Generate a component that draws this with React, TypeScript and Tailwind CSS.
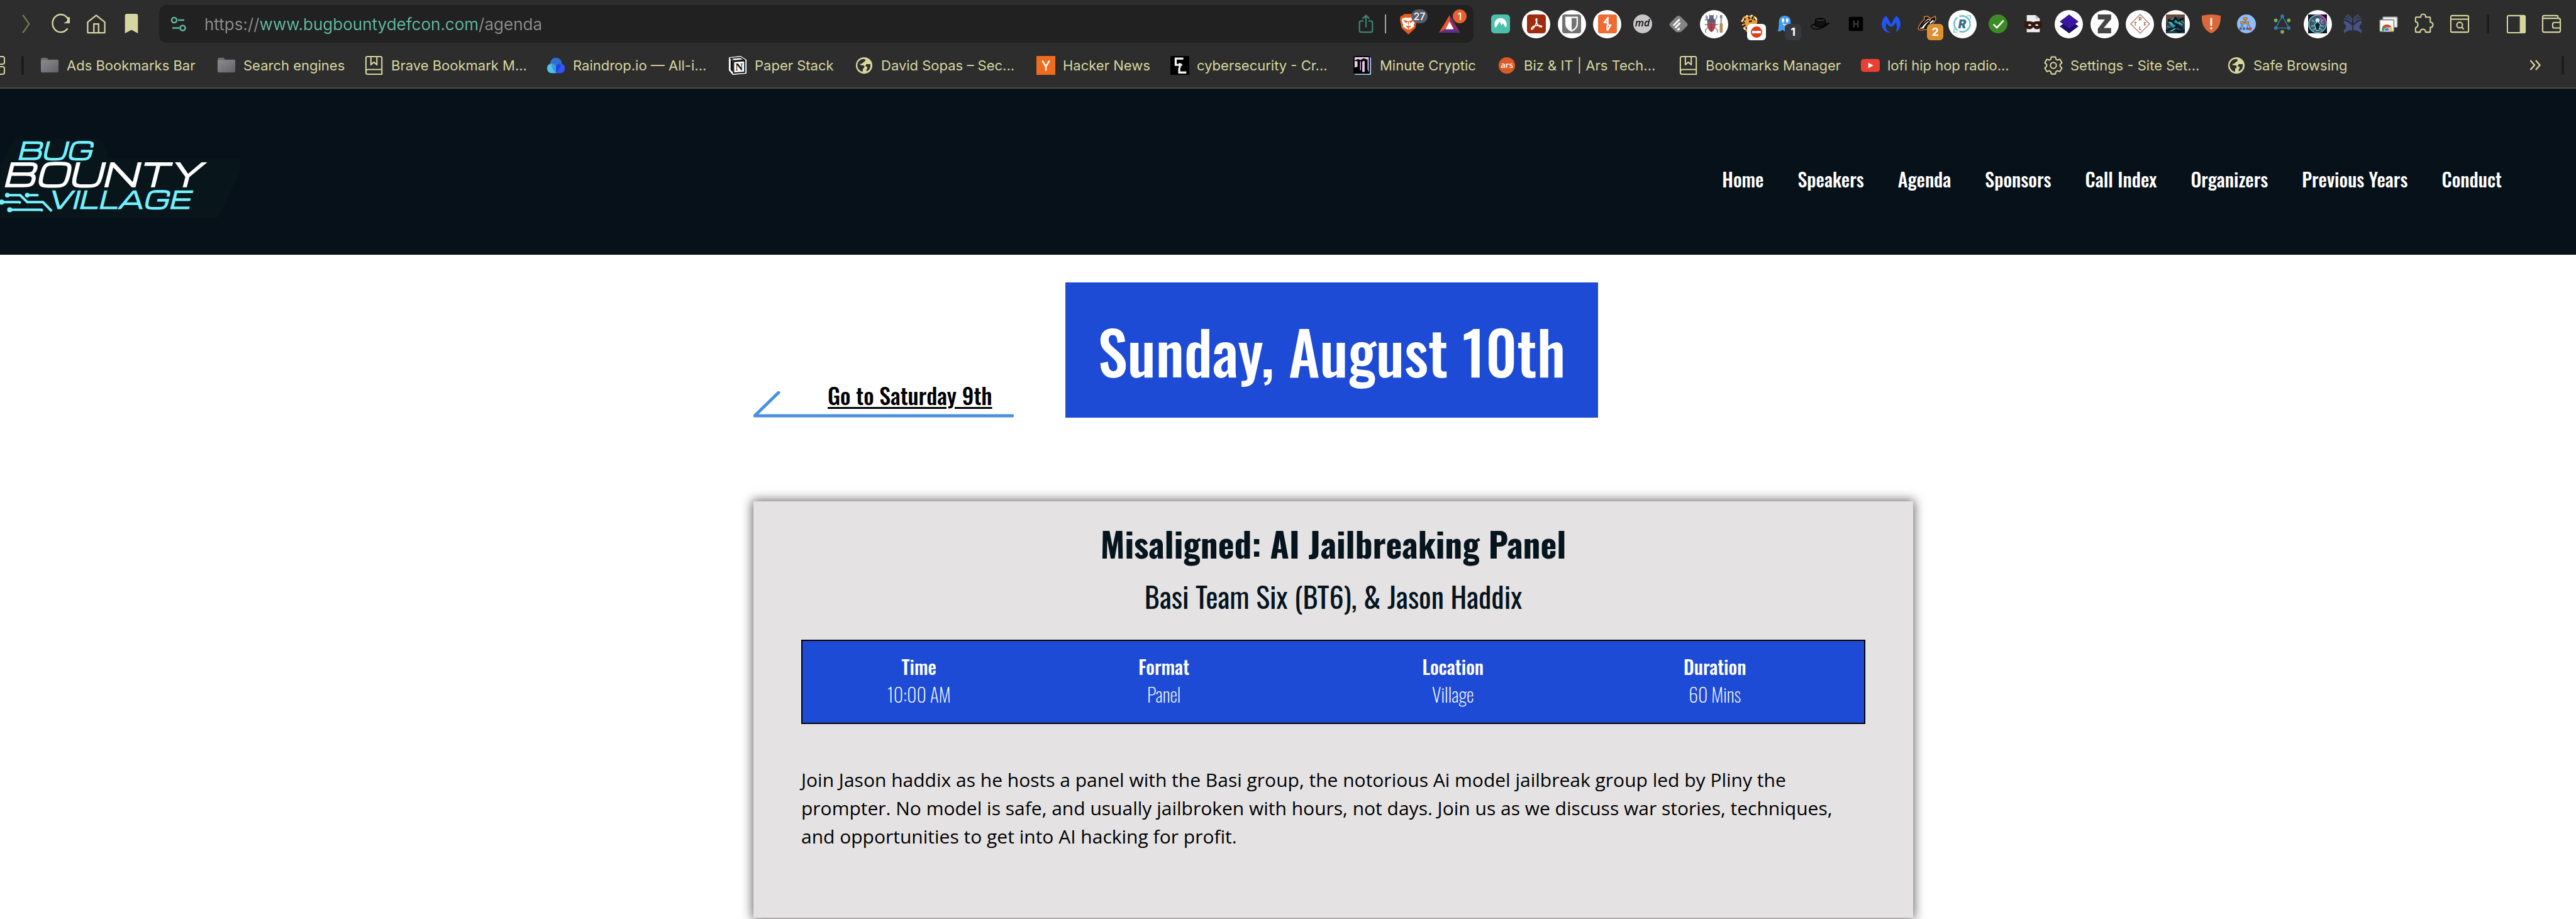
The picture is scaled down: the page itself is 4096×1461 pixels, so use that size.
import type { ReactNode } from "react";

const CREAM = "#d6d6a0";

function Glyph({ size = 32, children }: { size?: number; children: ReactNode }) {
  return (
    <svg viewBox={`0 0 ${size} ${size}`} className="size-[30px] shrink-0 overflow-visible" fill="none" aria-hidden="true">
      {children}
    </svg>
  );
}

function Ext({ label, disc, badge, children }: { label: string; disc?: boolean; badge?: ReactNode; children: ReactNode }) {
  return (
    <button type="button" aria-label={label} className="relative flex flex-1 items-center justify-center">
      <span className={disc ? "flex size-[45px] items-center justify-center rounded-full bg-white shadow" : "flex size-[45px] items-center justify-center"}>
        {children}
      </span>
      {badge}
    </button>
  );
}

function NavButton({ label, children }: { label: string; children: ReactNode }) {
  return (
    <button type="button" aria-label={label} className="flex w-14 items-center justify-center">
      {children}
    </button>
  );
}

/* ---------- bookmark icons ---------- */

const Folder = () => (
  <Glyph>
    <defs>
      <linearGradient id="folder" x1="0" y1="0" x2="1" y2="1">
        <stop offset="0" stopColor="#8a8a92" />
        <stop offset="0.5" stopColor="#77777d" />
        <stop offset="1" stopColor="#606064" />
      </linearGradient>
    </defs>
    <path d="M1 6q0-3 3-3h6q2 0 3 2l1 1h15q2 0 2 2v3H1z" fill="#6d6d72" />
    <rect x="1" y="7" width="30" height="21" rx="3" fill="url(#folder)" />
  </Glyph>
);

const BookIcon = () => (
  <Glyph>
    <g stroke={CREAM} strokeWidth="2.2" strokeLinejoin="round">
      <path d="M29 23V3.500Q29 1 26.500 1H4.500Q2 1 2 3.500V28Q2 31 5 31H30" />
      <path d="M2 26.500Q2 23 5.500 23H29M29 23v8" />
      <path d="M10.500 1V15L15.500 10.500L20.500 15V1" />
    </g>
  </Glyph>
);

const Raindrop = () => (
  <Glyph>
    <path d="M16 3C22 3 26 8 26 14C26 20 20 28 16 28C12 28 6 20 6 14C6 8 10 3 16 3Z" fill="#2f6fd0" />
    <path d="M1 21C1 16 4 13 8.500 13C13 13 16 16 16 21V29H8.500C4 29 1 25.500 1 21Z" fill="#4fc3e8" />
    <path d="M31 21C31 16 28 13 23.500 13C19 13 16 16 16 21V29H23.500C28 29 31 25.500 31 21Z" fill="#3355ff" />
    <path d="M8.500 13C13 13 16 16 16 21V28C12 26 8 20 8.500 13Z" fill="#3d9adf" />
    <path d="M23.500 13C19 13 16 16 16 21V28C20 26 24 20 23.500 13Z" fill="#1d46d8" />
  </Glyph>
);

const Notion = () => (
  <Glyph>
    <path d="M2 3L21 1L30 7V29L8 31L2 24Z" fill="#fff" stroke="#fff" strokeWidth="2" strokeLinejoin="round" />
    <path d="M4 4L21 2.500L27 6.500L9 8Z" fill="#fff" stroke="#111" strokeWidth="1.800" />
    <path d="M9 9.500L28 8V27.500L9 29Z" fill="#fff" stroke="#111" strokeWidth="2" />
    <path d="M4 5V23.500L8 28V9Z" fill="#111" />
    <text x="18.500" y="25" textAnchor="middle" fontFamily="Liberation Serif" fontWeight="700" fontSize="18" fill="#111">N</text>
  </Glyph>
);

const Globe = () => (
  <Glyph>
    <circle cx="16" cy="16" r="14" fill={CREAM} />
    <path d="M4.500 15C5 10 9 5 16 5L18 6C19 8 17 8.500 16 10C14 10.500 13.500 12 12.500 13H9.500V15.500L15 16C17 17 16.500 20 15.500 20.500C13.500 21 14 23 13.500 27C8 25.500 4.500 21 4.500 15Z" fill="#2d2d2d" />
    <path d="M26.500 13.500C24 14.500 22 13.500 20 13.500L18.500 16C18 18.500 20 18 21.500 18.500C22.500 20 20 22.500 19.500 24.500C20 25.500 21 26 22 25C26 22.500 27.500 18 26.500 13.500Z" fill="#2d2d2d" />
  </Glyph>
);

const HackerNews = () => (
  <Glyph>
    <path d="M0 0H32V32H0Z" fill="#ef6c1f" />
    <path d="M10 8L16 18L22 8M16 18V25" stroke="#fff" strokeWidth="2.600" />
  </Glyph>
);

const CyberIcon = () => (
  <Glyph>
    <path d="M0 0H32V32H0Z" fill="#000" />
    <path d="M22 4.500H9V15H20M16 12V20M15 20V28H27" stroke="#f2f2f2" strokeWidth="3.500" />
  </Glyph>
);

const Cryptic = () => (
  <Glyph>
    <rect x="2" y="2" width="28" height="30" rx="2" fill="#9cc4f5" />
    <rect x="0" y="0" width="28" height="30" rx="2" fill="#000" />
    <path d="M2 2H26V27H2Z" fill="#ecc8f2" />
    <path d="M1 8L8 5L12 7L17 4L24 6V23L26 28H19V9L17 8L15 10V25L16 28H1V20L7 18V9Z" fill="#000" />
    <path d="M12 9V24" stroke="#ecc8f2" strokeWidth="1.500" />
    <path d="M15.500 10L18.500 8V27H15.500Z" fill="#ecc8f2" />
  </Glyph>
);

const Ars = () => (
  <Glyph>
    <circle cx="16" cy="16" r="14" fill="#dd5a27" />
    <text x="16" y="20" textAnchor="middle" fontFamily="Open Sans" fontWeight="600" fontSize="14" fill="#fff">ars</text>
  </Glyph>
);

const YouTube = () => (
  <Glyph>
    <rect x="0" y="5" width="32" height="22" rx="5" fill="#ea4033" />
    <path d="M12.500 11.500L21 16L12.500 20.500Z" fill="#fff" />
  </Glyph>
);

const Gear = () => (
  <Glyph>
    <path
      d="M12.500 1.500H19.500L20.500 5.500L23 7L27 5.500L30.500 11.500L27.500 14.500V17.500L30.500 20.500L27 26.500L23 25L20.500 26.500L19.500 30.500H12.500L11.500 26.500L9 25L5 26.500L1.500 20.500L4.500 17.500V14.500L1.500 11.500L5 5.500L9 7L11.500 5.500Z"
      stroke={CREAM}
      strokeWidth="2.200"
      strokeLinejoin="round"
    />
    <circle cx="16" cy="16" r="5" stroke={CREAM} strokeWidth="2.200" />
  </Glyph>
);

const bookmarks: { name: string; icon: ReactNode; width: string }[] = [
  { name: "Ads Bookmarks Bar", icon: <Folder />, width: "w-[281px]" },
  { name: "Search engines", icon: <Folder />, width: "w-[235px]" },
  { name: "Brave Bookmark M...", icon: <BookIcon />, width: "w-[289px]" },
  { name: "Raindrop.io — All-i...", icon: <Raindrop />, width: "w-[289px]" },
  { name: "Paper Stack", icon: <Notion />, width: "w-[201px]" },
  { name: "David Sopas – Sec...", icon: <Globe />, width: "w-[289px]" },
  { name: "Hacker News", icon: <HackerNews />, width: "w-[213px]" },
  { name: "cybersecurity - Cr...", icon: <CyberIcon />, width: "w-[291px]" },
  { name: "Minute Cryptic", icon: <Cryptic />, width: "w-[229px]" },
  { name: "Biz & IT | Ars Tech...", icon: <Ars />, width: "w-[289px]" },
  { name: "Bookmarks Manager", icon: <BookIcon />, width: "w-[289px]" },
  { name: "lofi hip hop radio...", icon: <YouTube />, width: "w-[291px]" },
  { name: "Settings - Site Set...", icon: <Gear />, width: "w-[291px]" },
  { name: "Safe Browsing", icon: <Globe />, width: "w-[213px]" },
];

function Extensions() {
  return (
    <div className="ml-[15px] flex h-[60px] w-[1581px] shrink-0">
      <Ext label="VPN">
        <Glyph>
          <rect width="32" height="32" rx="6" fill="#4bc1ad" />
          <path d="M7 22.500C3 14 8 6 16 6C24 6 29 14 25 22.500L20 15L17.500 18L14.500 12L9.500 20Z" fill="#fff" />
        </Glyph>
      </Ext>
      <Ext label="PDF reader" disc>
        <Glyph>
          <rect width="32" height="32" rx="5" fill="#a02c10" />
          <path d="M7.500 24C9 19 19 17.500 24.500 19.500C27 21 23 23 19.500 19C16 15 14 7.500 16 7C18.500 7 16 17 11 23C9 26 7 26 7.500 24Z" stroke="#fff" strokeWidth="1.800" />
        </Glyph>
      </Ext>
      <Ext label="Password manager" disc>
        <Glyph>
          <rect width="32" height="32" rx="4" fill="#737373" />
          <path d="M6.500 5H25.500V16C25.500 22 21 25.500 16 28C11 25.500 6.500 22 6.500 16Z" stroke="#fff" strokeWidth="2.400" />
          <path d="M7 5H16V27C11 25 7 21 7 16Z" fill="#fff" />
        </Glyph>
      </Ext>
      <Ext label="Burp" disc>
        <Glyph>
          <rect width="32" height="32" rx="4" fill="#ef6b33" />
          <path d="M17.500 4.500L10.500 13.500H16.500V18H21.500L15.500 27.500M16.500 5V13.500M15.500 18V27" stroke="#fff" strokeWidth="2.600" strokeLinejoin="round" />
        </Glyph>
      </Ext>
      <Ext label="Markdown">
        <Glyph>
          <circle cx="16" cy="16" r="16" fill="#c8c8c8" />
          <text x="15.500" y="20.500" textAnchor="middle" fontFamily="Open Sans" fontStyle="italic" fontWeight="600" fontSize="17" fill="#111">md</text>
        </Glyph>
      </Ext>
      <Ext label="Feed reader">
        <Glyph>
          <path d="M12 4Q16 0 20 4L30 14Q33 17.500 30 20L22 28Q20 30 17 30H14Q12 30 10 28L2 20Q-1 17 2 14Z" fill="#848484" />
          <path d="M8 18L17 9M11 22L18 15M15 26L17 24" stroke="#fff" strokeWidth="3" strokeLinecap="round" />
        </Glyph>
      </Ext>
      <Ext label="Bug inspector" disc>
        <Glyph>
          <path d="M5 3V9L1 9M3 1V6L6 10M1 17H6M6 22L2 26V31M17 10L21 6V1M18 17H23M18 22L22 26V31M8 0L10 4M16 0L14 4" stroke="#777d8c" strokeWidth="1.500" />
          <circle cx="12" cy="5" r="4" fill="#62687a" />
          <path d="M5 9Q12 3 19 9V14H5Z" fill="#565f7d" />
          <path d="M5 14H19Q20 25 12 30Q4 25 5 14Z" fill="#a8464f" />
          <path d="M12 14V29" stroke="#4e4a58" />
          <path d="M26.500 1H30.500V6H29.500V16H27.500V6H26.500Z" fill="#7a8290" />
          <rect x="26" y="15" width="5" height="16" rx="1.500" fill="#b5894c" />
        </Glyph>
      </Ext>
      <Ext
        label="Tiger blocker"
        badge={
          <span className="absolute right-0.5 bottom-1 flex h-[26px] w-[30px] items-center justify-center rounded-md bg-white">
            <span className="flex size-[18px] items-center justify-center rounded-full bg-[#dd3c18]">
              <span className="h-1 w-3.5 bg-white" />
            </span>
          </span>
        }
      >
        <Glyph>
          <path d="M3 10Q4 1 12 3Q18 0 25 3Q30 6 29 13L27 18L15 29H9L3 19Z" fill="#e9a03e" />
          <path d="M4 12L9 7M1 15L8 14M3 21L9 18M14 4L16 8M22 3L20 8M8 28L11 22M15 12L20 11M27 9L23 8" stroke="#1c1712" strokeWidth="2.500" />
          <path d="M2 12L6 8M10 3L13 2M18 2L21 2M25 5L28 9M6 23L10 26" stroke="#fff" strokeWidth="2.500" />
        </Glyph>
      </Ext>
      <Ext
        label="Ghost"
        badge={
          <span className="absolute right-0.5 bottom-1 flex h-[26px] w-[26px] items-center justify-center rounded-md bg-[#37393e] font-['Inter'] text-lg font-bold text-white">1</span>
        }
      >
        <Glyph>
          <path d="M6 13Q6 2 16 2Q26 2 26 13V29L21 27L16 29L12 26L7 29L4 28Q6 23 6 13Z" fill="#459ded" />
          <ellipse cx="13" cy="10" rx="2" ry="3.500" fill="#fff" />
          <ellipse cx="20" cy="10" rx="2" ry="3.500" fill="#fff" />
          <path d="M13 16Q16 20 20 16" stroke="#fff" strokeWidth="1.500" />
        </Glyph>
      </Ext>
      <Ext label="Hat">
        <Glyph>
          <path d="M7 18L9 8Q16 5 24 8L26 17Q16 25 7 18Z" fill="#101010" stroke="#000" strokeWidth="1.500" />
          <path d="M8 17Q1 17 1 21Q2 25 10 25Q20 25 31 15Q28 15 25 17" stroke="#000" strokeWidth="1.500" />
          <path d="M10 9Q16 12 24 9" stroke="#555" />
        </Glyph>
      </Ext>
      <Ext label="H tool">
        <Glyph>
          <rect x="4" y="4" width="24" height="24" rx="2" fill="#000" />
          <path d="M12.500 10V22M19.500 10V22M12.500 16H19.500" stroke="#3a3a3a" strokeWidth="2.400" />
        </Glyph>
      </Ext>
      <Ext label="Malware guard">
        <Glyph>
          <path d="M7 2Q11 6 16 17Q21 6 25 2Q32 8 32 17Q30 27 24 30Q28 20 24 14Q20 20 16 21Q12 20 8 14Q4 27 16 31Q1 31 0 16Q1 7 7 2Z" fill="#1f55f5" />
        </Glyph>
      </Ext>
      <Ext
        label="Badger"
        badge={
          <span className="absolute right-0.5 bottom-1 flex h-[26px] w-[26px] items-center justify-center rounded-md bg-[#dd9031] font-['Inter'] text-lg font-bold text-white">2</span>
        }
      >
        <Glyph>
          <path d="M1 23Q6 12 12 8L11 4L17 3L22 7L30 3L31 9L27 14L22 24L10 26Q2 28 1 23Z" fill="#0d0d0d" stroke="#d9813f" strokeWidth="1.600" />
          <path d="M4 24Q9 14 18 7L23 9Q15 14 10 24Z" fill="#fff" />
          <path d="M6 22Q11 14 20 9" stroke="#111" strokeWidth="2.500" />
          <path d="M21 15L27 10" stroke="#fff" strokeWidth="2.500" />
        </Glyph>
      </Ext>
      <Ext label="R tool" disc>
        <Glyph>
          <circle cx="16" cy="16" r="13.500" stroke="#72c3cc" strokeWidth="2.800" strokeDasharray="26 3" />
          <path d="M2 24V30H8M30 8V2H24" stroke="#72c3cc" strokeWidth="1.500" />
          <text x="16" y="23" textAnchor="middle" fontFamily="Inter" fontStyle="italic" fontWeight="900" fontSize="20" fill="#2f6f88">R</text>
        </Glyph>
      </Ext>
      <Ext label="Verified">
        <Glyph>
          <circle cx="16" cy="16" r="16" fill="#3d8b27" />
          <path d="M9 17.500L14 22.500L24.500 11" stroke="#fff" strokeWidth="2.800" strokeLinecap="round" />
        </Glyph>
      </Ext>
      <Ext label="Mask">
        <Glyph>
          <path d="M5 1H20L27 7V30H5Z" fill="#eeeef0" />
          <path d="M20 1V7H27Z" fill="#bdbdc2" />
          <path d="M1 13Q8 10 16 13Q24 10 31 13V19Q28 25 22 25Q18 25 16 21Q14 25 9 25Q3 25 1 19Z" fill="#33190f" />
          <path d="M7 18Q10 15 13 18Q10 21 7 18ZM19 18Q22 15 25 18Q22 21 19 18Z" fill="#fff" />
        </Glyph>
      </Ext>
      <Ext label="Layers" disc>
        <Glyph>
          <path d="M16 9L32 20L16 32L0 20Z" fill="#1b0a66" />
          <path d="M16 0L32 12L16 24L0 12Z" fill="#3a15a0" />
        </Glyph>
      </Ext>
      <Ext label="Z tool" disc>
        <Glyph>
          <path d="M5 0H27.500V8L15 23H27.500V32H5V24L17 8.500H5Z" fill="#454545" />
        </Glyph>
      </Ext>
      <Ext label="RTFL" disc>
        <Glyph>
          <path d="M16 0L32 16L16 32L0 16Z" fill="#fff" stroke="#a0654e" strokeWidth="1.200" />
          <g fontFamily="Inter" fontWeight="600" fontSize="8" fill="#7c4a35" textAnchor="middle">
            <text x="16" y="11">R</text>
            <text x="8" y="19">T</text>
            <text x="24.500" y="19">F</text>
            <text x="16" y="27">L</text>
          </g>
        </Glyph>
      </Ext>
      <Ext label="Hunter" disc>
        <Glyph>
          <path d="M0 0H32V32H0Z" fill="#20444e" />
          <path d="M0 0H32V8L20 4L8 7L0 14Z" fill="#6d4a38" />
          <circle cx="15" cy="14" r="9" fill="#2f93a0" />
          <path d="M3 9L12 12L16 6L21 11L30 6M11 14L20 18L12 26M18 19L28 24M0 28L10 24L22 29L32 27" stroke="#0c1620" strokeWidth="3.500" />
          <path d="M5 13L12 17M22 14L28 18M8 28L16 24" stroke="#62d2da" strokeWidth="1.500" />
          <path d="M26 11L31 15M2 20L7 22" stroke="#c9683c" strokeWidth="1.500" />
        </Glyph>
      </Ext>
      <Ext label="Warning shield">
        <Glyph>
          <path d="M0 2Q16-2 32 2Q33 24 16 32Q-1 24 0 2Z" fill="#d9693a" />
          <path d="M16 7V18" stroke="#fff" strokeWidth="3" strokeLinecap="round" />
          <circle cx="16" cy="23.500" r="1.900" fill="#fff" />
        </Glyph>
      </Ext>
      <Ext label="Org chart">
        <Glyph>
          <circle cx="16" cy="16" r="16" fill="#93bdf8" />
          <path d="M14 8V13M8 17L5 25M9 17L11 25M19 17L16 25M20 17L24 25M8 13H20" stroke="#4c5568" />
          <path d="M11 5H17V9H11ZM6 12H12V16H6ZM14 12H20V16H14Z" fill="#d39a3a" stroke="#6b5732" strokeWidth="0.700" />
          <path d="M4 22H8V26H4ZM10 22H14V26H10ZM16 22H20V26H16Z" fill="#47618e" />
          <path d="M20 22H25V27H20Z" fill="#c0504a" />
        </Glyph>
      </Ext>
      <Ext label="Graph">
        <Glyph>
          <path d="M16 3L27.500 23H4.500Z" stroke="#3779b5" strokeWidth="1.700" />
          <circle cx="16" cy="3" r="3" fill="#3779b5" />
          <circle cx="5" cy="23" r="3" fill="#3779b5" />
          <circle cx="27" cy="23" r="3" fill="#3779b5" />
          <circle cx="5" cy="10" r="3" fill="#77b255" />
          <circle cx="27" cy="10" r="3" fill="#77b255" />
          <circle cx="16" cy="29.500" r="3" fill="#77b255" />
        </Glyph>
      </Ext>
      <Ext label="Mandala" disc>
        <Glyph>
          <path d="M0 0H32V32H0Z" fill="#170f22" />
          <circle cx="16" cy="16" r="15" fill="#3e5566" stroke="#59d4d9" strokeWidth="1.500" />
          <path d="M16 1A15 15 0 0 1 31 16" stroke="#c24bbd" strokeWidth="2.500" />
          <circle cx="16" cy="10" r="3.500" fill="#cfeff2" />
          <path d="M16 12L21 17L18 27H14L11 17Z" fill="#10222e" stroke="#74e3e8" strokeWidth="1.200" />
          <path d="M6 9L11 13M26 9L21 13M5 20L11 19M27 20L21 19M8 27L13 23M24 27L19 23" stroke="#8ac6cf" strokeWidth="1.500" />
          <path d="M20 6L25 11M22 14L27 15" stroke="#d058c4" strokeWidth="1.800" />
        </Glyph>
      </Ext>
      <Ext label="Open book">
        <Glyph>
          <path d="M1 10Q10 13 15 19V27Q8 26 1 32V26Q6 24 4 18L1 15ZM31 10Q22 13 17 19V27Q24 26 31 32V26Q26 24 28 18L31 15Z" fill="#465384" />
          <path d="M1 7Q9 8 14 14M3 3Q10 5 14.500 12M6 0Q12 3 15 9M31 7Q23 8 18 14M29 3Q22 5 17.500 12M26 0Q20 3 17 9" stroke="#465384" strokeWidth="1.600" />
        </Glyph>
      </Ext>
      <Ext label="Chrome windows">
        <Glyph>
          <rect x="6" y="4" width="25" height="18" rx="1.500" fill="#f2f2f2" stroke="#777" strokeWidth="1.500" />
          <rect x="1" y="9" width="24" height="20" rx="1.500" fill="#f7f7f7" stroke="#777" strokeWidth="1.500" />
          <path d="M5 28A8.500 8.500 0 0 1 13 17V28Z" fill="#3b9a55" />
          <path d="M13 17A9 9 0 0 1 22 28H13Z" fill="#f0c23c" />
          <path d="M5.500 21A9 9 0 0 1 20.500 21L13 23Z" fill="#cf4a35" />
          <path d="M9 28A4.200 4.200 0 1 1 17 28Z" fill="#3d73e0" stroke="#fff" />
        </Glyph>
      </Ext>
      <Ext label="Extensions">
        <Glyph>
          <path
            d="M2 5.500Q2 4.500 3 4.500H11Q10.500-0.500 15 -0.500Q19.500-0.500 19 4.500H26Q27 4.500 27 5.500V13Q31.500 13.500 31.500 17.500Q31.500 21.500 27 22V29Q27 30 26 30H19Q19 25 14.500 25Q10 25 10 30H3Q2 30 2 29V22.500Q6 21.500 6 17Q6 13 2 12.500Z"
            stroke={CREAM}
            strokeWidth="2.200"
            strokeLinejoin="round"
          />
        </Glyph>
      </Ext>
      <Ext label="Search tabs">
        <Glyph>
          <rect x="1" y="2" width="30" height="28" rx="2" stroke={CREAM} strokeWidth="2.200" />
          <path d="M1 8H31" stroke={CREAM} strokeWidth="2.200" />
          <circle cx="16" cy="18" r="4.800" stroke={CREAM} strokeWidth="2.200" />
          <path d="M19.500 21.500L23 25" stroke={CREAM} strokeWidth="2.200" />
        </Glyph>
      </Ext>
    </div>
  );
}

function Toolbar() {
  return (
    <div className="flex h-[76px] items-center pl-[13px]">
      <NavButton label="Forward">
        <Glyph><path d="M11 1L21.500 16L11 31" stroke="#7f7f66" strokeWidth="2.200" /></Glyph>
      </NavButton>
      <NavButton label="Reload">
        <Glyph>
          <path d="M26.500 24.500A14 15 0 1 1 28.500 9" stroke={CREAM} strokeWidth="2.600" strokeLinecap="round" />
          <path d="M30.500 5V14.500H21.500Q28 13 28 5Z" fill={CREAM} stroke={CREAM} strokeLinejoin="round" />
        </Glyph>
      </NavButton>
      <NavButton label="Home">
        <Glyph>
          <path d="M1.500 13L16 1.500L30.500 13V31H1.500Z" stroke={CREAM} strokeWidth="2.400" strokeLinejoin="round" />
          <path d="M12 31V16H20V31" stroke={CREAM} strokeWidth="2.400" />
        </Glyph>
      </NavButton>
      <NavButton label="Bookmark">
        <Glyph><path d="M5 2Q5 -1 8 -1H24Q27 -1 27 2V32L16 26L5 32Z" fill={CREAM} /></Glyph>
      </NavButton>

      <div className="ml-4 flex h-[60px] flex-1 items-center rounded-xl bg-[#212121] pl-[18px]">
        <button type="button" aria-label="Site settings" className="flex w-[26px] shrink-0 justify-center">
          <svg viewBox="0 0 26 26" className="size-[26px]" fill="none" stroke="#5fb8a0" strokeWidth="2.500" aria-hidden="true">
            <circle cx="6" cy="7" r="4" />
            <path d="M12 7H22" />
            <circle cx="19.500" cy="19.500" r="4" />
            <path d="M3 19.500H14" />
          </svg>
        </button>
        <input
          type="text"
          aria-label="Address"
          defaultValue="https://www.bugbountydefcon.com/agenda"
          className="ml-7 min-w-0 flex-1 bg-[linear-gradient(90deg,#8c8c8c_88px,#5fb8a0_88px,#5fb8a0_437px,#8c8c8c_437px)] bg-clip-text font-['Inter'] text-[26px] text-transparent outline-none"
        />
        <button type="button" aria-label="Share" className="flex w-8 shrink-0 justify-center">
          <svg viewBox="0 0 32 32" className="size-[30px]" fill="none" stroke="#3f8273" strokeWidth="2.400" strokeLinecap="round" strokeLinejoin="round" aria-hidden="true">
            <path d="M11 11H8Q5 11 5 14V27Q5 30 8 30H24Q27 30 27 27V14Q27 11 24 11H21M16 21V2M11 6.500L16 1.500L21 6.500" />
          </svg>
        </button>
        <span className="ml-3.5 h-[30px] w-0.5 shrink-0 bg-[#a6a6a6]" />
        <button type="button" aria-label="Shields, 27 blocked" className="relative ml-4 flex w-[38px] shrink-0 justify-center">
          <svg viewBox="0 0 32 38" className="h-[35px] w-[29px]" fill="none" aria-hidden="true">
            <path d="M9 1H23L27 4L30 5L31 11L28 26L16 37L4 26L1 11L2 5L5 4Z" fill="#ec5a1c" />
            <path d="M5 9L11 7L16 8L21 7L27 9L28 13L25 20L26 23L20 27L16 29L12 27L6 23L7 20L4 13Z" fill="#fff" />
            <path d="M8 12L14 14L12 16ZM24 12L18 14L20 16ZM16 14V20M12 22L16 25L20 22M16 25V29" fill="#ec5a1c" stroke="#ec5a1c" strokeWidth="1.500" />
          </svg>
          <span className="absolute top-[-6px] right-[-12px] flex h-[22px] w-[26px] items-center justify-center rounded-full bg-[#595c6b] font-['Inter'] text-base font-medium text-white">27</span>
        </button>
        <button type="button" aria-label="Rewards, 1 new" className="relative mr-[19px] ml-7 flex w-[38px] shrink-0 justify-center">
          <svg viewBox="0 0 36 32" className="h-[30px] w-[34px]" aria-hidden="true">
            <path d="M18 1L0 31L12 24L18 14Z" fill="#f0562a" />
            <path d="M18 1L36 31L24 24L18 14Z" fill="#8c2f63" />
            <path d="M0 31H36L24 24H12Z" fill="#5b2f8c" />
            <path d="M18 12L11 25H25Z" fill="#fff" />
          </svg>
          <span className="absolute top-[-8px] right-[-8px] flex size-[22px] items-center justify-center rounded-full bg-[#ea602f] font-['Inter'] text-base font-medium text-white">1</span>
        </button>
      </div>

      <Extensions />

      <span className="ml-[15px] h-[30px] w-1 shrink-0 rounded-full bg-[#1c1c1c]" />
      <div className="ml-[15px] flex shrink-0">
        <NavButton label="Sidebar">
          <Glyph>
            <rect x="1" y="2" width="30" height="29" rx="2" stroke={CREAM} strokeWidth="2.200" />
            <path d="M22 2H31V31H22Z" fill={CREAM} />
          </Glyph>
        </NavButton>
        <NavButton label="Wallet">
          <Glyph>
            <path d="M27 6.500V3.500Q27 2 25 2H3.500Q1 2 1 4.500V27.500Q1 30 3.500 30H28.500Q31 30 31 27.500V9.500Q31 6.500 28 6.500H2" stroke={CREAM} strokeWidth="2.200" />
            <path d="M31 13.500H21Q18 13.500 18 16.500V20.500Q18 23 21 23H31" stroke={CREAM} strokeWidth="2.200" />
          </Glyph>
        </NavButton>
      </div>
      <span className="w-[11px] shrink-0" />
    </div>
  );
}

function BookmarksBar() {
  return (
    <nav aria-label="Bookmarks" className="flex h-[63px] items-center pb-2">
      <button type="button" aria-label="All bookmarks" className="w-2 shrink-0 overflow-hidden">
        <svg viewBox="0 0 8 30" className="h-[30px] w-2" fill="none" stroke={CREAM} strokeWidth="2" aria-hidden="true">
          <rect x="-6" y="1" width="13" height="12" rx="3" />
          <rect x="-6" y="17" width="13" height="12" rx="3" />
        </svg>
      </button>
      <span className="ml-[26px] h-[30px] w-1 shrink-0 rounded-full bg-[#1c1c1c]" />
      <ul className="ml-[26px] flex flex-1">
        {bookmarks.map((b) => (
          <li key={b.name} className={b.width}>
            <a href="#" className="flex items-center gap-3 font-['Inter'] text-[22px] leading-[30px] whitespace-nowrap text-[#d6d6a0]">
              {b.icon}
              {b.name}
            </a>
          </li>
        ))}
      </ul>
      <button type="button" aria-label="More bookmarks" className="mr-[30px] flex w-6 shrink-0 justify-center">
        <svg viewBox="0 0 20 18" className="h-[17px] w-5" fill="none" stroke={CREAM} strokeWidth="2.500" aria-hidden="true">
          <path d="M2 1L9 9L2 17M11 1L18 9L11 17" />
        </svg>
      </button>
      <span className="mr-[19px] h-[30px] w-1 shrink-0 rounded-full bg-[#1c1c1c]" />
    </nav>
  );
}

function Logo() {
  return (
    <a href="#" aria-label="Bug Bounty Village">
      <svg viewBox="0 -150 1320 842" className="h-[264px] w-[414px]" aria-hidden="true">
        <path d="M72 104H500L548 170L540 204H1218V270L1106 504H0V240Z" fill="#08161b" />
        <g fontFamily="'Michroma', 'Bruno Ace', 'DejaVu Sans'" fontWeight="700" fontStyle="italic">
          <text x="84" y="212" fontSize="122" fill="#74f0fd">BUG</text>
          <text x="12" y="346" fontSize="162" fill="#fff">BOUNTY</text>
          <text x="240" y="459" fontSize="122" fill="#74f0fd">VILLAGE</text>
        </g>
        <g fill="none" stroke="#74f0fd" strokeWidth="13">
          <path d="M37 390H102L138 425H218L262 471" />
          <path d="M138 390H195M10 425H98L104 431M49 464H210L216 470" />
        </g>
        <g fill="#74f0fd">
          <circle cx="37" cy="390" r="12" />
          <circle cx="138" cy="390" r="12" />
          <circle cx="8" cy="425" r="13" />
          <circle cx="49" cy="464" r="13" />
        </g>
      </svg>
    </a>
  );
}

const pages = ["Home", "Speakers", "Agenda", "Sponsors", "Call Index", "Organizers", "Previous Years", "Conduct"];

const facts = [
  { label: "Time", value: "10:00 AM" },
  { label: "Format", value: "Panel" },
  { label: "Location", value: "Village" },
  { label: "Duration", value: "60 Mins" },
];

export default function App() {
  return (
    <div className="min-h-screen bg-white font-['Oswald','Liberation_Sans_Narrow',sans-serif]">
      <div className="border-b-2 border-[#4d4e42] bg-[#2d2d2d]">
        <Toolbar />
        <BookmarksBar />
      </div>

      <header className="flex h-[264px] items-center justify-between bg-[#06111a] pr-[118px]">
        <Logo />
        <nav aria-label="Main">
          <ul className="flex gap-[54px] pt-6 text-[30px] leading-10 font-medium text-white">
            {pages.map((p) => (
              <li key={p}><a href="#" className="whitespace-nowrap">{p}</a></li>
            ))}
          </ul>
        </nav>
      </header>

      <div className="pl-36">
        <main className="mx-auto w-[1844px] pt-11">
          <div className="flex items-end">
            <div className="w-[414px]">
              <a href="#" className="block pl-[118px] text-[36px] leading-10 font-medium whitespace-nowrap text-black underline decoration-3 underline-offset-3">
                Go to Saturday 9th
              </a>
              <svg viewBox="0 0 414 42" className="-mt-[26px] block h-[42px] w-full" fill="none" stroke="#4a8fe2" strokeWidth="5" strokeLinecap="round" strokeLinejoin="round" aria-hidden="true">
                <path d="M40 2L2 39H412" />
              </svg>
            </div>
            <h1 className="ml-[82px] flex h-[215px] w-[847px] items-center justify-center bg-[#1e4bd6] text-[95px] leading-[120px] font-medium whitespace-nowrap text-white">
              Sunday, August 10th
            </h1>
          </div>

          <article className="mt-[133px] bg-[#e4e2e3] px-[76px] pt-[30px] pb-[107px] text-center text-[#06141d] shadow-[0_0_16px_2px_rgba(0,0,0,0.6)]">
            <h2 className="text-[55px] leading-[72px] font-bold">Misaligned: AI Jailbreaking Panel</h2>
            <p className="mt-4 text-[46px] leading-[64px]">Basi Team Six (BT6), &amp; Jason Haddix</p>
            <dl className="mt-[38px] grid h-[134px] grid-cols-[370fr_408fr_510fr_322fr_76fr] items-center border-2 border-black bg-[#1e4bd6] pb-1 text-[30px] leading-[44px] text-white">
              {facts.map((f) => (
                <div key={f.label}>
                  <dt className="font-medium">{f.label}</dt>
                  <dd className="font-extralight">{f.value}</dd>
                </div>
              ))}
            </dl>
            <p className="mt-[66px] text-left font-['Open_Sans'] text-[30px] leading-[45px] text-black">
              Join Jason haddix as he hosts a panel with the Basi group, the notorious Ai model jailbreak group led by Pliny the prompter. No model is safe, and usually jailbroken with hours, not days. Join us as we discuss war stories, techniques, and opportunities to get into AI hacking for profit.
            </p>
          </article>
        </main>
      </div>
    </div>
  );
}
